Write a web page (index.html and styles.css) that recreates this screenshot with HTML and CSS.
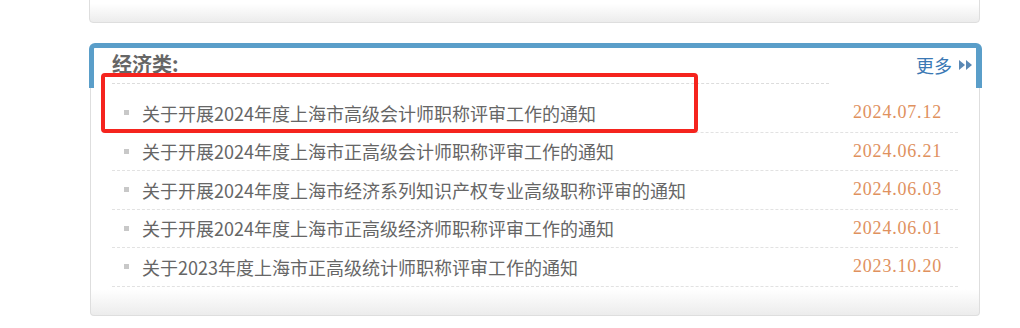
FILE: index.html
```html
<!DOCTYPE html>
<html lang="zh-CN">
<head>
    <meta charset="UTF-8">
    <title>经济类</title>
    <link rel="stylesheet" href="styles.css">
</head>
<body>
    <div class="top-card"></div>

    <div class="section">
        <div class="sec-head">
            <div class="sec-title">经济类:</div>
            <a class="more" href="#">更多
                <svg class="more-icon" width="15" height="12" viewBox="0 0 15 12">
                    <path d="M1 1 L7 6 L1 11 Z" fill="#5a88b4"/>
                    <path d="M8 1 L14 6 L8 11 Z" fill="#5a88b4"/>
                </svg>
            </a>
        </div>
        <div class="sec-body">
            <ul class="news">
                <li><span class="dot"></span><a href="#">关于开展2024年度上海市高级会计师职称评审工作的通知</a><span class="date">2024.07.12</span></li>
                <li><span class="dot"></span><a href="#">关于开展2024年度上海市正高级会计师职称评审工作的通知</a><span class="date">2024.06.21</span></li>
                <li><span class="dot"></span><a href="#">关于开展2024年度上海市经济系列知识产权专业高级职称评审的通知</a><span class="date">2024.06.03</span></li>
                <li><span class="dot"></span><a href="#">关于开展2024年度上海市正高级经济师职称评审工作的通知</a><span class="date">2024.06.01</span></li>
                <li><span class="dot"></span><a href="#">关于2023年度上海市正高级统计师职称评审工作的通知</a><span class="date">2023.10.20</span></li>
            </ul>
        </div>
        <div class="mark"></div>
    </div>
</body>
</html>
```

FILE: styles.css
```css
body {
    margin: 0;
    padding: 0;
    background-color: #fff;
    font-family: "Noto Sans CJK SC", "Noto Sans", sans-serif;
}

a {
    text-decoration: none;
}

.top-card {
    width: 889px;
    height: 41px;
    margin: -20px 0 0 89px;
    border: 1px solid #dedede;
    border-radius: 0 0 4px 4px;
    background: linear-gradient(to bottom, #fff 55%, #ececec);
}

.section {
    position: relative;
    width: 893px;
    margin: 20px 0 0 89px;
}

.sec-head {
    display: flex;
    height: 40px;
    border: 5px solid #5a9ec9;
    border-right-width: 6px;
    border-bottom: none;
    border-radius: 6px 6px 0 0;
    padding-left: 18px;
}

.sec-title {
    width: 717px;
    height: 35px;
    line-height: 32px;
    border-bottom: 1px dashed #dcdcdc;
    font-size: 20px;
    font-weight: bold;
    color: #666;
}

.more {
    display: flex;
    align-items: center;
    height: 34px;
    margin-left: auto;
    margin-right: 3px;
    font-size: 18px;
    color: #3b78b4;
}

.more-icon {
    margin-left: 6px;
}

.sec-body {
    margin: 0 2px 0 1px;
    padding: 6px 21px 28px 21px;
    border: 1px solid #dedede;
    border-top: none;
    border-radius: 0 0 4px 4px;
    background: linear-gradient(to bottom, #fff calc(100% - 26px), #ececec);
}

.news {
    list-style: none;
    margin: 0;
    padding: 0;
}

.news li {
    display: flex;
    align-items: center;
    height: 37.5px;
    padding: 0 16px 0 12px;
    border-bottom: 1px dashed #e2e2e2;
}

.news li a {
    font-size: 18px;
    color: #666;
}

.dot {
    width: 5px;
    height: 5px;
    margin-right: 13px;
    background-color: #c8c8c8;
}

.date {
    margin-left: auto;
    font-family: "Liberation Serif", serif;
    font-size: 18px;
    letter-spacing: 0.8px;
    color: #e0915e;
}

.mark {
    position: absolute;
    left: 12px;
    top: 30px;
    width: 589px;
    height: 52px;
    border: 4px solid #f5241e;
    border-radius: 4px;
}
```
